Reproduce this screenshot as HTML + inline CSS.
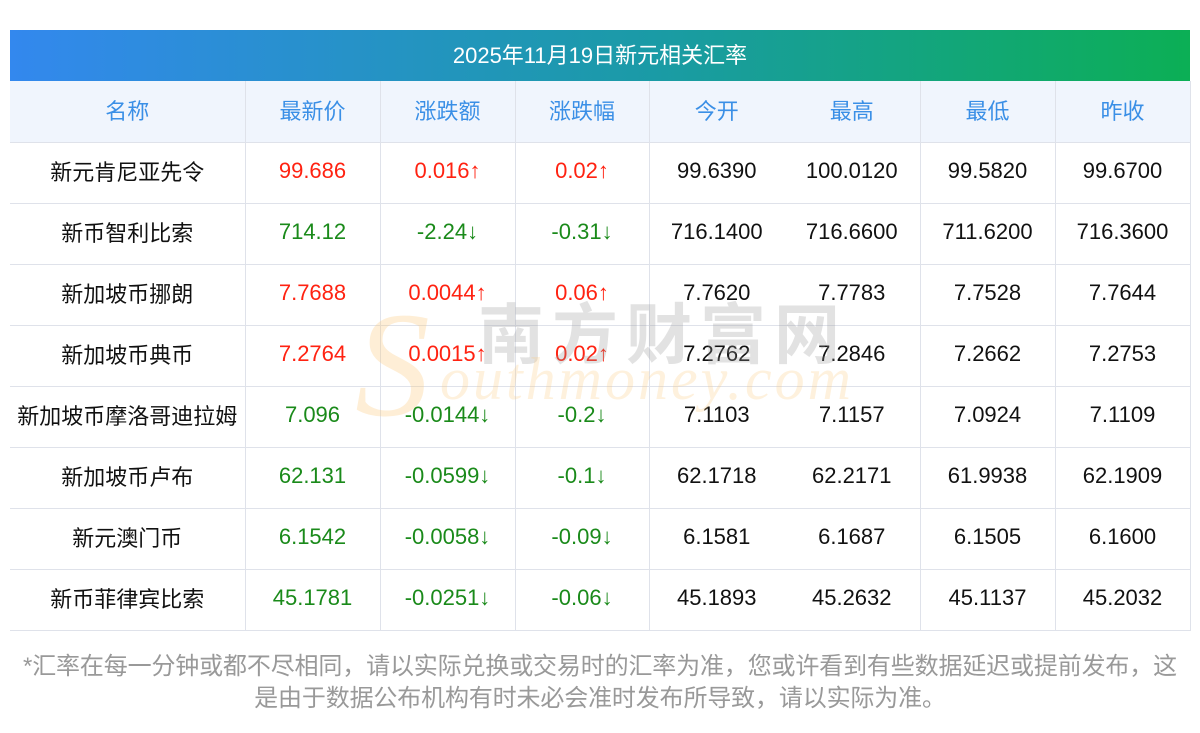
<!DOCTYPE html>
<html><head><meta charset="utf-8"><style>
body{margin:0;background:#fff;width:1200px;height:733px;overflow:hidden;font-family:"Liberation Sans","Noto Sans CJK SC",sans-serif;position:relative}
.title{position:absolute;left:10px;top:30px;width:1180px;height:51px;background:linear-gradient(90deg,#3388ee,#1a9ba5 55%,#0caf55);color:#fff;font-size:22px;line-height:51px;text-align:center}
table{position:absolute;left:10px;top:81px;border-collapse:collapse;table-layout:fixed;width:1180px}
td{height:61px;border-bottom:1px solid #dfe2ea;text-align:center;font-size:22px;color:#111;padding:0 0 3px 0;box-sizing:border-box;white-space:nowrap}
tr.h td{background:#f0f5fd;color:#3a8fe6}
td.b{border-right:1px solid #dfe2ea}
.r{color:#f21}.g{color:#1a8a1a}
.foot{position:absolute;left:0;top:651px;width:1200px;text-align:center;color:#999;font-size:24px;line-height:32px;letter-spacing:-0.15px}
.wm1{position:absolute;left:478px;top:295px;font-size:66px;color:rgba(150,150,150,.28);letter-spacing:8px;font-weight:bold;font-family:"Noto Sans CJK SC",sans-serif;line-height:70px}
.wm2{position:absolute;left:440px;top:345px;font-size:60px;color:rgba(253,200,120,.25);font-style:italic;font-family:"Liberation Serif",serif;letter-spacing:3px}
.wm3{position:absolute;left:355px;top:290px;font-size:150px;color:rgba(253,200,120,.3);font-style:italic;font-family:"Liberation Serif",serif;line-height:150px}
</style></head><body>
<div class="title">2025年11月19日新元相关汇率</div>
<table>
<colgroup><col style="width:235px"><col style="width:135px"><col style="width:135px"><col style="width:134px"><col style="width:135px"><col style="width:136px"><col style="width:135px"><col style="width:135px"></colgroup>
<tr class="h"><td class="b">名称</td><td class="b">最新价</td><td class="b">涨跌额</td><td class="b">涨跌幅</td><td>今开</td><td class="b">最高</td><td class="b">最低</td><td class="b">昨收</td></tr>
<tr><td class="b">新元肯尼亚先令</td><td class="b r">99.686</td><td class="b r">0.016↑</td><td class="b r">0.02↑</td><td>99.6390</td><td class="b">100.0120</td><td class="b">99.5820</td><td class="b">99.6700</td></tr>
<tr><td class="b">新币智利比索</td><td class="b g">714.12</td><td class="b g">-2.24↓</td><td class="b g">-0.31↓</td><td>716.1400</td><td class="b">716.6600</td><td class="b">711.6200</td><td class="b">716.3600</td></tr>
<tr><td class="b">新加坡币挪朗</td><td class="b r">7.7688</td><td class="b r">0.0044↑</td><td class="b r">0.06↑</td><td>7.7620</td><td class="b">7.7783</td><td class="b">7.7528</td><td class="b">7.7644</td></tr>
<tr><td class="b">新加坡币典币</td><td class="b r">7.2764</td><td class="b r">0.0015↑</td><td class="b r">0.02↑</td><td>7.2762</td><td class="b">7.2846</td><td class="b">7.2662</td><td class="b">7.2753</td></tr>
<tr><td class="b">新加坡币摩洛哥迪拉姆</td><td class="b g">7.096</td><td class="b g">-0.0144↓</td><td class="b g">-0.2↓</td><td>7.1103</td><td class="b">7.1157</td><td class="b">7.0924</td><td class="b">7.1109</td></tr>
<tr><td class="b">新加坡币卢布</td><td class="b g">62.131</td><td class="b g">-0.0599↓</td><td class="b g">-0.1↓</td><td>62.1718</td><td class="b">62.2171</td><td class="b">61.9938</td><td class="b">62.1909</td></tr>
<tr><td class="b">新元澳门币</td><td class="b g">6.1542</td><td class="b g">-0.0058↓</td><td class="b g">-0.09↓</td><td>6.1581</td><td class="b">6.1687</td><td class="b">6.1505</td><td class="b">6.1600</td></tr>
<tr><td class="b">新币菲律宾比索</td><td class="b g">45.1781</td><td class="b g">-0.0251↓</td><td class="b g">-0.06↓</td><td>45.1893</td><td class="b">45.2632</td><td class="b">45.1137</td><td class="b">45.2032</td></tr>
</table>
<div class="wm3">S</div>
<div class="wm1">南方财富网</div>
<div class="wm2">outhmoney.com</div>
<div class="foot">*汇率在每一分钟或都不尽相同，请以实际兑换或交易时的汇率为准，您或许看到有些数据延迟或提前发布，这<br>是由于数据公布机构有时未必会准时发布所导致，请以实际为准。</div>
</body></html>
